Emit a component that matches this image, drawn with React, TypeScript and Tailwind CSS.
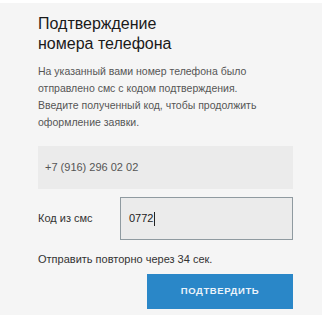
export default function App() {
  return (
    <div className="w-[330px] h-[320px] bg-white pt-[3px] pr-[8px] pb-[5px] font-['Liberation_Sans',sans-serif]">
      <div className="h-full bg-[#f5f5f5] pl-[38px] pr-[29px] pt-[11px]">
        <h1 className="text-[16px] leading-[20px] text-[#1a1a1a]">
          Подтверждение
          <br />
          номера телефона
        </h1>

        <p className="mt-[9px] text-[10.5px] leading-[17px] text-[#555]">
          На указанный вами номер телефона было
          <br />
          отправлено смс с кодом подтверждения.
          <br />
          Введите полученный код, чтобы продолжить
          <br />
          оформление заявки.
        </p>

        <div className="mt-[15px] h-[43px] bg-[#ebebeb] flex items-center px-[7px] text-[11px] text-[#555]">
          +7 (916) 296 02 02
        </div>

        <div className="mt-[8px] flex items-center">
          <span className="w-[82px] text-[11px] text-[#333]">Код из смс</span>
          <div className="flex-1 h-[43px] bg-[#ebebeb] border border-[#8f9aa0] flex items-center px-[8px] text-[11px] text-[#222]">
            0772<span className="ml-[1px] w-px h-[14px] bg-[#222]"></span>
          </div>
        </div>

        <p className="mt-[12px] text-[11px] leading-[14px] text-[#333]">
          Отправить повторно через 34 сек.
        </p>

        <div className="mt-[8px] flex justify-end">
          <button className="w-[146px] h-[35px] bg-[#2a87c8] text-[#eaf3fa] text-[9.5px] font-bold tracking-[0.6px]">
            ПОДТВЕРДИТЬ
          </button>
        </div>
      </div>
    </div>
  )
}
